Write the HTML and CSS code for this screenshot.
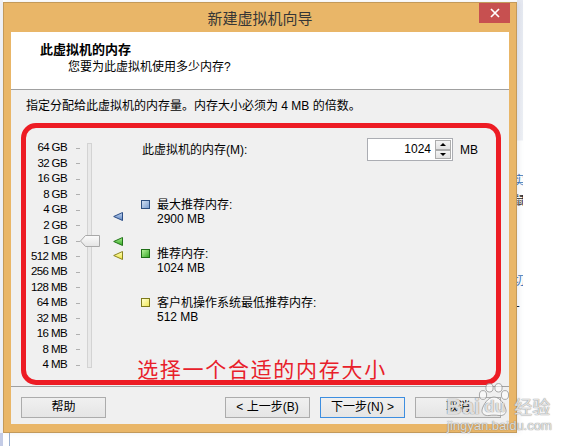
FILE: index.html
```html
<!DOCTYPE html>
<html lang="zh-CN">
<head>
<meta charset="utf-8">
<title>新建虚拟机向导</title>
<link rel="stylesheet" href="styles.css">
</head>
<body>
<div class="edge-left"></div>
<div class="edge-line"></div>
<div class="peek">
  <span class="pk pk1">实</span>
  <span class="pk pk2">鼠</span>
  <span class="pk pk3">切</span>
  <span class="pk pk4">L</span>
</div>

<div class="window">
  <div class="titlebar">
    <span></span>
    <div class="title">新建虚拟机向导</div>
    <div class="close">
      <svg width="10" height="10" viewBox="0 0 10 10"><path d="M1 1 L9 9 M9 1 L1 9" stroke="#fff" stroke-width="1.7" fill="none"/></svg>
    </div>
  </div>

  <div class="content">
    <div class="header">
      <div class="h-title">此虚拟机的内存</div>
      <div class="h-sub">您要为此虚拟机使用多少内存?</div>
    </div>

    <div class="body">
      <div class="intro">指定分配给此虚拟机的内存量。内存大小必须为 4 MB 的倍数。</div>

      <div class="panel">
        <div class="scale">
          <div class="labels">
            <span>64 GB</span><span>32 GB</span><span>16 GB</span><span>8 GB</span><span>4 GB</span>
            <span>2 GB</span><span>1 GB</span><span>512 MB</span><span>256 MB</span><span>128 MB</span>
            <span>64 MB</span><span>32 MB</span><span>16 MB</span><span>8 MB</span><span>4 MB</span>
          </div>
          <div class="ticks">
            <i></i><i></i><i></i><i></i><i></i><i></i><i></i><i></i><i></i><i></i><i></i><i></i><i></i><i></i><i></i>
          </div>
          <div class="track">
            <svg class="thumb" width="20" height="12" viewBox="0 0 20 12">
              <defs><linearGradient id="tg" x1="0" y1="0" x2="0" y2="1"><stop offset="0" stop-color="#fbfbfb"/><stop offset="1" stop-color="#e4e4e4"/></linearGradient></defs>
              <polygon points="0.5,6 5.5,0.5 19.5,0.5 19.5,11.5 5.5,11.5" fill="url(#tg)" stroke="#a8a8a8"/>
            </svg>
          </div>
        </div>

        <div class="markers">
          <svg class="tri" style="top:74px" width="10" height="9" viewBox="0 0 10 9">
            <defs><linearGradient id="gb" x1="0" y1="0" x2="0" y2="1"><stop offset="0" stop-color="#c3d6ef"/><stop offset="1" stop-color="#5f86c4"/></linearGradient></defs>
            <polygon points="0.7,4.5 9.5,0.5 9.5,8.5" fill="url(#gb)" stroke="#2b4d86"/>
          </svg>
          <svg class="tri" style="top:99px" width="10" height="9" viewBox="0 0 10 9">
            <defs><linearGradient id="gg" x1="0" y1="0" x2="0" y2="1"><stop offset="0" stop-color="#a8ee8e"/><stop offset="1" stop-color="#34a824"/></linearGradient></defs>
            <polygon points="0.7,4.5 9.5,0.5 9.5,8.5" fill="url(#gg)" stroke="#23741a"/>
          </svg>
          <svg class="tri" style="top:113px" width="10" height="9" viewBox="0 0 10 9">
            <defs><linearGradient id="gy" x1="0" y1="0" x2="0" y2="1"><stop offset="0" stop-color="#ffffc0"/><stop offset="1" stop-color="#ece23a"/></linearGradient></defs>
            <polygon points="0.7,4.5 9.5,0.5 9.5,8.5" fill="url(#gy)" stroke="#8a8420"/>
          </svg>
        </div>

        <div class="info">
          <div class="mem-row">
            <span class="mem-label">此虚拟机的内存(M):</span>
            <div class="spin">
              <div class="spin-field">1024</div>
              <div class="spin-btns"><span class="sb up"></span><span class="sb down"></span></div>
            </div>
            <span class="unit">MB</span>
          </div>

          <div class="legend">
            <div class="item">
              <span class="sq sq-blue"></span>
              <div class="item-text"><div>最大推荐内存:</div><div>2900 MB</div></div>
            </div>
            <div class="item">
              <span class="sq sq-green"></span>
              <div class="item-text"><div>推荐内存:</div><div>1024 MB</div></div>
            </div>
            <div class="item">
              <span class="sq sq-yellow"></span>
              <div class="item-text"><div>客户机操作系统最低推荐内存:</div><div>512 MB</div></div>
            </div>
          </div>
        </div>
      </div>
    </div>

    <div class="footer">
      <button class="btn">帮助</button>
      <div class="nav">
        <button class="btn">&lt; 上一步(B)</button>
        <button class="btn btn-default">下一步(N) &gt;</button>
        <button class="btn btn-wide">取消</button>
      </div>
    </div>

    <div class="annot"><span class="annot-text">选择一个合适的内存大小</span></div>
  </div>
</div>

<div class="watermark">
  <div class="wm-row">
    <span class="wm-bai">Bai</span>
    <span class="wm-paw">
      <svg width="34" height="34" viewBox="0 0 34 34">
        <g fill="rgba(255,255,255,0.6)" stroke="rgba(140,140,140,0.75)" stroke-width="1">
          <ellipse cx="6" cy="12" rx="3.6" ry="4.4"/>
          <ellipse cx="12.5" cy="4.8" rx="3.6" ry="4.2"/>
          <ellipse cx="21.5" cy="4.8" rx="3.6" ry="4.2"/>
          <ellipse cx="28" cy="12" rx="3.6" ry="4.4"/>
          <path d="M17 14 C11 14 6 22 5 27 C4.5 31 8 33 12 32.5 C15 32 19 32 22 32.5 C26 33 29.5 31 29 27 C28 22 23 14 17 14 Z"/>
        </g>
      </svg>
      <span class="wm-du">du</span>
    </span>
    <span class="wm-jy">经验</span>
  </div>
  <div class="wm-url">jingyan.baidu.com</div>
</div>
</body>
</html>
```

FILE: styles.css
```css
* { box-sizing: border-box; }

html, body { margin: 0; }

body {
  position: relative;
  width: 586px;
  height: 446px;
  overflow: hidden;
  padding: 2px 0 0 3px;
  background: #ffffff;
  font-family: "Liberation Sans", "Noto Sans CJK SC", sans-serif;
  font-size: 12px;
  color: #000;
}

/* desktop bits around the window */
.edge-left {
  position: absolute;
  left: 0;
  top: 0;
  width: 3px;
  height: 446px;
  background: linear-gradient(#f1f2f7 0, #f1f2f7 433px, #c4cce6 433px);
}
.edge-line {
  position: absolute;
  left: 9px;
  top: 433px;
  width: 1px;
  height: 13px;
  background: #9db2d0;
}
.peek {
  position: absolute;
  left: 517px;
  top: 0;
  width: 6px;
  height: 446px;
  overflow: hidden;
  background: linear-gradient(#e6e9f1 0, #eef0f5 140px, #ffffff 141px);
}
.pk {
  position: absolute;
  left: -4px;
  font-family: "Noto Sans CJK SC", sans-serif;
  font-size: 12px;
  line-height: 14px;
}
.pk1 { top: 173px; color: #3b73b9; }
.pk2 { top: 193px; color: #222; }
.pk3 { top: 273px; color: #3b73b9; }
.pk4 { top: 295px; color: #222; }

/* window */
.window {
  position: relative;
  z-index: 1;
  width: 514px;
  height: 431px;
  border: 1px solid #c39a5b;
  background: #e9b668;
  padding: 0 7px 8px 7px;
  display: flex;
  flex-direction: column;
  box-shadow: 2px 0 5px rgba(90, 100, 130, 0.12);
}

.titlebar {
  height: 29px;
  display: grid;
  grid-template-columns: 1fr auto 1fr;
  align-items: start;
}
.title {
  line-height: 29px;
  font-family: "Noto Sans CJK SC", sans-serif;
  font-size: 15px;
  color: #363636;
}
.close {
  justify-self: end;
  margin-right: -1px;
  width: 31px;
  height: 20px;
  background: #c75050;
  display: flex;
  align-items: center;
  justify-content: center;
}

.content {
  position: relative;
  flex: 1;
  background: #f0f0f0;
  display: flex;
  flex-direction: column;
}

.header {
  height: 58px;
  background: #ffffff;
  border-bottom: 1px solid #a0a0a0;
  padding: 9px 0 0 29px;
}
.h-title {
  font-family: "Noto Sans CJK SC", sans-serif;
  font-weight: 700;
  font-size: 13px;
  line-height: 16px;
}
.h-sub {
  margin-top: 2px;
  padding-left: 28px;
  line-height: 16px;
}

.body {
  flex: 1;
  padding: 8px 0 0 15px;
}
.intro {
  line-height: 16px;
}

.panel {
  margin-top: 24px;
  display: flex;
  align-items: flex-start;
}

/* slider scale */
.scale {
  display: flex;
  align-items: flex-start;
}
.labels {
  width: 41px;
  padding-top: 2.25px;
  display: flex;
  flex-direction: column;
}
.labels span {
  height: 15.5px;
  line-height: 15.5px;
  text-align: right;
  font-size: 11.5px;
  letter-spacing: -0.6px;
  white-space: nowrap;
  color: #000;
}
.ticks {
  width: 4px;
  margin-left: 9px;
  padding-top: 2.25px;
  display: flex;
  flex-direction: column;
}
.ticks i {
  display: block;
  height: 15.5px;
  background: linear-gradient(#b0b0b0, #b0b0b0) center / 100% 1px no-repeat;
}
.track {
  position: relative;
  width: 5px;
  height: 225px;
  margin-left: 7px;
  margin-top: 5px;
  background: #e9e9e9;
  border: 1px solid #d3d3d3;
}
.thumb {
  position: absolute;
  left: -8px;
  top: 91px;
}

.markers {
  position: relative;
  width: 48px;
  align-self: stretch;
}
.tri {
  position: absolute;
  left: 21px;
}

/* info column */
.info {
  flex: 1;
}
.mem-row {
  height: 23px;
  display: grid;
  grid-template-columns: 227px 86px auto;
  align-items: center;
}
.mem-label {
  padding-left: 2px;
  line-height: 16px;
}
.unit {
  margin-left: 7px;
  line-height: 16px;
}
.spin {
  width: 86px;
  height: 23px;
  border: 1px solid #abadb3;
  background: #fff;
  padding: 1px;
  display: flex;
}
.spin-field {
  flex: 1;
  text-align: right;
  padding-right: 4px;
  line-height: 19px;
}
.spin-btns {
  width: 16px;
  display: flex;
  flex-direction: column;
}
.sb {
  position: relative;
  flex: 1;
  border: 1px solid #acacac;
  background: linear-gradient(#f4f4f4, #e1e1e1);
}
.sb::after {
  content: "";
  position: absolute;
  left: 50%;
  top: 50%;
  margin-left: -3px;
  border-left: 3px solid transparent;
  border-right: 3px solid transparent;
}
.up::after {
  margin-top: -2px;
  border-bottom: 3px solid #000;
}
.down::after {
  margin-top: -1px;
  border-top: 3px solid #000;
}

.legend {
  margin-top: 37px;
  display: flex;
  flex-direction: column;
  gap: 21px;
}
.item {
  display: flex;
  align-items: flex-start;
  gap: 7px;
}
.sq {
  width: 9px;
  height: 9px;
  margin-left: 1px;
  margin-top: 2px;
  border: 1px solid;
}
.sq-blue { background: linear-gradient(135deg, #d0def2, #7b9fd0); border-color: #2d4f80; }
.sq-green { background: linear-gradient(135deg, #b4f29a, #3aab2a); border-color: #1f6e17; }
.sq-yellow { background: linear-gradient(135deg, #ffffd0, #f0e85a); border-color: #7d7a1c; }
.item-text {
  line-height: 14px;
}

/* footer */
.footer {
  height: 38px;
  border-top: 1px solid #a0a0a0;
  padding: 10px 8px 0 10px;
  display: flex;
  align-items: flex-start;
}
.nav {
  margin-left: auto;
  display: flex;
  gap: 10px;
}
.btn {
  width: 85px;
  height: 21px;
  padding: 0;
  border: 1px solid #acacac;
  background: linear-gradient(#f0f0f0, #e5e5e5);
  font-family: "Liberation Sans", "Noto Sans CJK SC", sans-serif;
  font-size: 12px;
  line-height: 19px;
  color: #000;
}
.btn-default {
  border-color: #3d8ee0;
}
.btn-wide {
  width: 86px;
}

/* red annotation overlay */
.annot {
  position: absolute;
  left: 10px;
  top: 91px;
  width: 480px;
  height: 262px;
  border: 5px solid #ed1c24;
  border-radius: 15px;
  display: flex;
  align-items: flex-end;
  justify-content: center;
  pointer-events: none;
}
.annot-text {
  font-family: "Noto Sans CJK SC", sans-serif;
  font-size: 21px;
  line-height: 24px;
  letter-spacing: 1.7px;
  color: #e8202a;
  padding-left: 2px;
}

/* watermark overlay */
.watermark {
  position: absolute;
  left: 446px;
  top: 381px;
  z-index: 2;
  color: rgba(255, 255, 255, 0.75);
  text-shadow: 0 0 1px rgba(110, 110, 110, 0.8), 0 0 1px rgba(110, 110, 110, 0.6);
  pointer-events: none;
}
.wm-row {
  display: flex;
  align-items: flex-end;
  height: 36px;
}
.wm-bai {
  font-weight: 700;
  font-size: 22px;
  line-height: 20px;
  margin-right: -3px;
}
.wm-paw {
  position: relative;
  width: 34px;
  height: 34px;
}
.wm-paw svg { display: block; }
.wm-du {
  position: absolute;
  left: 7px;
  top: 15px;
  font-weight: 700;
  font-size: 17px;
  line-height: 18px;
}
.wm-jy {
  margin-left: 3px;
  font-family: "Noto Sans CJK SC", sans-serif;
  font-size: 18px;
  line-height: 22px;
}
.wm-url {
  margin-top: 2px;
  margin-left: 1px;
  font-size: 13px;
  line-height: 14px;
}
```
